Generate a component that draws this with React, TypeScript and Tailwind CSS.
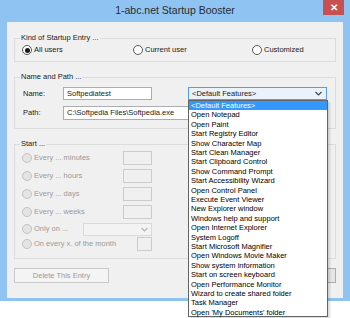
import React from 'react';

const features = [
  '<Default Features>',
  'Open Notepad',
  'Open Paint',
  'Start Registry Editor',
  'Show Character Map',
  'Start Clean Manager',
  'Start Clipboard Control',
  'Show Command Prompt',
  'Start Accessibility Wizard',
  'Open Control Panel',
  'Execute Event Viewer',
  'New Explorer window',
  'Windows help and support',
  'Open Internet Explorer',
  'System Logoff',
  'Start Microsoft Magnifier',
  'Open Windows Movie Maker',
  'Show system information',
  'Start on screen keyboard',
  'Open Performance Monitor',
  'Wizard to create shared folder',
  'Task Manager',
  "Open 'My Documents' folder",
];

function Radio({ checked, disabled }: { checked?: boolean; disabled?: boolean }) {
  return (
    <span
      className={
        disabled
          ? 'flex h-[10px] w-[10px] shrink-0 items-center justify-center rounded-full border border-[#c2c2c2] bg-[#e4e4e4]'
          : 'flex h-[10px] w-[10px] shrink-0 items-center justify-center rounded-full border border-[#5a5a5a] bg-white'
      }
    >
      {checked && <span className="h-[5px] w-[5px] rounded-full bg-[#1a1a1a]" />}
    </span>
  );
}

function Group({ title, className, children }: { title: string; className?: string; children: React.ReactNode }) {
  return (
    <fieldset className={'border border-[#dcdcdc] pl-[5px] ' + (className ?? '')}>
      <legend className="px-[1px] leading-[10px] text-[#1a1a1a]">{title}</legend>
      {children}
    </fieldset>
  );
}

function Chevron({ color }: { color: string }) {
  return (
    <svg width="7" height="5" viewBox="0 0 7 5">
      <path d="M0.5 1 L3.5 4 L6.5 1" fill="none" stroke={color} strokeWidth="1.2" />
    </svg>
  );
}

export default function App() {
  const timed = ['Every ... minutes', 'Every ... hours', 'Every ... days', 'Every ... weeks'];

  return (
    <div className="relative h-[318px] w-[350px] bg-white text-[7.5px] font-['Liberation_Sans',Arial,sans-serif]">
      <div className="flex h-[301px] w-[350px] flex-col bg-[#8fc4f2]">
        <div className="relative flex h-[22px] items-center justify-center">
          <span className="text-[10.5px] text-[#2b2b2b]">1-abc.net Startup Booster</span>
          <div className="absolute right-[6px] top-0 flex h-[15px] w-[21px] items-center justify-center bg-[#c75050] text-[10px] font-bold text-white">
            ✕
          </div>
        </div>

        <div className="mx-[7px] flex h-[276px] flex-col bg-[#f0f0f0] px-[7px] pt-[11px]">
          <Group title="Kind of Startup Entry ..." className="pb-[4px]">
            <div className="ml-[2px] flex h-[14px] items-center text-[#1a1a1a]">
              <div className="flex w-[111px] items-center gap-[2px]">
                <Radio checked />
                <span>All users</span>
              </div>
              <div className="flex w-[119px] items-center gap-[2px]">
                <Radio />
                <span>Current user</span>
              </div>
              <div className="flex items-center gap-[2px]">
                <Radio />
                <span>Customized</span>
              </div>
            </div>
          </Group>

          <Group title="Name and Path ..." className="mt-[10px] pb-[8px]">
            <div className="ml-[3px] mt-[5px] flex h-[13px] items-center text-[#1a1a1a]">
              <span className="w-[40px]">Name:</span>
              <div className="flex h-[13px] w-[89px] items-center border border-[#abadb3] bg-white pl-[3px]">
                Softpediatest
              </div>
              <div className="ml-[36px] flex h-[13px] w-[139px] items-center justify-between border border-[#569de5] bg-[#eaf3fc] pl-[3px] pr-[4px]">
                <span>&lt;Default Features&gt;</span>
                <Chevron color="#444" />
              </div>
            </div>
            <div className="ml-[3px] mt-[6px] flex h-[14px] items-center text-[#1a1a1a]">
              <span className="w-[40px]">Path:</span>
              <div className="flex h-[14px] w-[162px] items-center whitespace-nowrap border border-[#abadb3] bg-white pl-[3px]">
                C:\Softpedia Files\Softpedia.exe
              </div>
            </div>
          </Group>

          <Group title="Start ..." className="mt-[10px] pb-[7px]">
            <div className="ml-[2px] flex flex-col text-[#9a9a9a]">
              {timed.map((t) => (
                <div key={t} className="flex h-[18px] w-[130px] items-center justify-between">
                  <div className="flex items-center gap-[2px]">
                    <Radio disabled />
                    <span>{t}</span>
                  </div>
                  <div className="h-[14px] w-[29px] border border-[#cccccc] bg-[#f0f0f0]" />
                </div>
              ))}
              <div className="flex h-[16px] w-[130px] items-center justify-between">
                <div className="flex items-center gap-[2px]">
                  <Radio disabled />
                  <span>Only on ...</span>
                </div>
                <div className="flex h-[13px] w-[69px] items-center justify-end border border-[#d9d9d9] bg-[#f3f3f3] pr-[3px]">
                  <Chevron color="#b5b5b5" />
                </div>
              </div>
              <div className="flex h-[14px] w-[130px] items-center justify-between">
                <div className="flex items-center gap-[2px]">
                  <Radio disabled />
                  <span>On every x. of the month</span>
                </div>
                <div className="h-[14px] w-[15px] border border-[#cccccc] bg-[#f0f0f0]" />
              </div>
            </div>
          </Group>

          <div className="mt-[9px] flex h-[15px] items-center justify-between">
            <div className="flex h-[15px] w-[95px] items-center justify-center border border-[#c9c9c9] bg-[#f4f4f4] text-[#9a9a9a]">
              Delete This Entry
            </div>
            {/* second button sits under the open list, only its edge shows */}
            <div className="h-[15px] w-[95px] border border-[#adadad] bg-[#e5e5e5]" />
          </div>
        </div>
      </div>

      <div className="absolute left-[188px] top-[100px] flex h-[217px] w-[140px] flex-col border border-[#646464] bg-white shadow-[2px_2px_2px_rgba(0,0,0,0.15)]">
        {features.map((f, i) => (
          <div
            key={f}
            className={
              i === 0
                ? 'flex h-[9.4px] items-center whitespace-nowrap bg-[#3399ff] pl-[2px] text-white'
                : 'flex h-[9.4px] items-center whitespace-nowrap pl-[2px] text-black'
            }
          >
            {f}
          </div>
        ))}
      </div>
    </div>
  );
}
